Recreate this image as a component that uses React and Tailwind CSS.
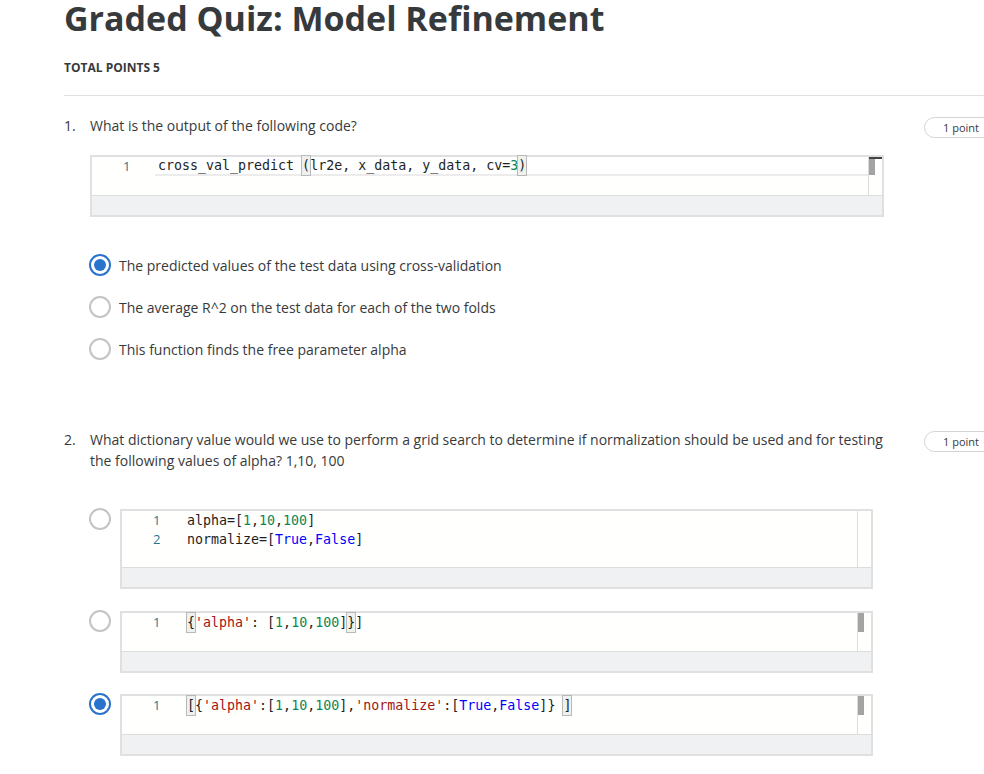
import React from "react";

const mono = "font-['DejaVu_Sans_Mono',monospace] text-[13.3px] text-[#1e1e1e]";

function Num({ children }) {
  return <span className="text-[#098658]">{children}</span>;
}
function Str({ children }) {
  return <span className="text-[#a31515]">{children}</span>;
}
function Kw({ children }) {
  return <span className="text-[#0000ff]">{children}</span>;
}
function Match({ children }) {
  return (
    <span className="outline outline-1 outline-[#b9b9b9] bg-[#eef2ee]">{children}</span>
  );
}

function Radio({ checked }) {
  if (checked) {
    return (
      <div className="w-[22px] h-[22px] shrink-0 rounded-full border-2 border-[#2a73cc] flex items-center justify-center bg-white">
        <div className="w-[12px] h-[12px] rounded-full bg-[#2a73cc]" />
      </div>
    );
  }
  return <div className="w-[22px] h-[22px] shrink-0 rounded-full border-2 border-[#c4c4c4] bg-white" />;
}

function Pill() {
  return (
    <div className="ml-[40px] mt-[2px] h-[21px] w-[76px] shrink-0 rounded-full border border-[#d4d4d4] pl-[18px] text-[11px] leading-[19px] text-[#373a3c]">
      1 point
    </div>
  );
}

function CodeBox({ lines, width, height, gutter, thumb, darkTop, active }) {
  return (
    <div className={`border-2 border-[#e0e0e0] bg-[#fffffe] flex flex-col ${width}`}>
      <div className={`flex ${height}`}>
        <div className="flex-1 flex flex-col">
          {lines.map((line, i) => (
            <div key={i} className="flex h-[19px] items-center">
              <div className={`${gutter} shrink-0 pl-[31px] text-[13px] font-['Open_Sans',sans-serif] text-[#237893]`}>
                {i + 1}
              </div>
              <div
                className={`flex-1 h-[19px] flex items-center pl-[3px] whitespace-pre ${mono} ${
                  active ? "bg-white border-b-2 border-[#ececec]" : ""
                }`}
              >
                {line}
              </div>
            </div>
          ))}
        </div>
        <div className="w-[14px] shrink-0 border-l border-[#dddddd] flex flex-col">
          {darkTop && <div className="h-[2px] w-[13px] bg-[#444444]" />}
          {thumb && <div className={`w-[6px] bg-[#a3a3a3] ${darkTop ? "h-[16px]" : "h-[19px]"}`} />}
        </div>
      </div>
      <div className="h-[20px] border-t border-[#dddddd] bg-[#f0f1f3]" />
    </div>
  );
}

function TextOption({ checked, children }) {
  return (
    <div className="flex h-[42px] items-center gap-[8px] ml-[-1px]">
      <Radio checked={checked} />
      <span className="text-[14px] text-[#373a3c]">{children}</span>
    </div>
  );
}

function CodeOption({ checked, children, mt }) {
  return (
    <div className={`flex items-start ml-[-1px] ${mt}`}>
      <div className="mt-[-1px]">
        <Radio checked={checked} />
      </div>
      <div className="ml-[9px]">{children}</div>
    </div>
  );
}

export default function App() {
  return (
    <div className="w-[984px] h-[774px] overflow-hidden bg-white pl-[64px] font-['Open_Sans',sans-serif] text-[#373a3c]">
      <h1 className="text-[34px] leading-[36px] font-bold text-[#373a3c] whitespace-nowrap">
        Graded Quiz: Model Refinement
      </h1>
      <div className="mt-[24px] text-[12px] leading-[16px] font-bold uppercase">Total Points 5</div>
      <div className="mt-[19px] h-px bg-[#e0e0e0]" />

      {/* question 1 */}
      <div className="mt-[19px] flex items-start">
        <div className="w-[26px] shrink-0 text-[14px] leading-[21px]">1.</div>
        <div className="w-[794px] shrink-0">
          <div className="text-[14px] leading-[21px]">What is the output of the following code?</div>
          <div className="mt-[19px]">
            <CodeBox
              width="w-[794px]"
              height="h-[38px]"
              gutter="w-[63px]"
              thumb
              darkTop
              active
              lines={[
                <>
                  cross_val_predict <Match>(</Match>lr2e, x_data, y_data, cv=<Num>3</Num>
                  <Match>)</Match>
                </>,
              ]}
            />
          </div>
          <div className="mt-[27px] flex flex-col">
            <TextOption checked>The predicted values of the test data using cross-validation</TextOption>
            <TextOption>The average R^2 on the test data for each of the two folds</TextOption>
            <TextOption>This function finds the free parameter alpha</TextOption>
          </div>
        </div>
        <Pill />
      </div>

      {/* question 2 */}
      <div className="mt-[59px] flex items-start">
        <div className="w-[26px] shrink-0 text-[14px] leading-[21px]">2.</div>
        <div className="w-[794px] shrink-0">
          <div className="text-[14px] leading-[21px] whitespace-nowrap">
            What dictionary value would we use to perform a grid search to determine if normalization should be used and for testing
            <br />
            the following values of alpha? 1,10, 100
          </div>
          <CodeOption mt="mt-[38px]">
            <CodeBox
              width="w-[753px]"
              height="h-[56px]"
              gutter="w-[62px]"
              lines={[
                <>
                  alpha=[<Num>1</Num>,<Num>10</Num>,<Num>100</Num>]
                </>,
                <>
                  normalize=[<Kw>True</Kw>,<Kw>False</Kw>]
                </>,
              ]}
            />
          </CodeOption>
          <CodeOption mt="mt-[22px]">
            <CodeBox
              width="w-[753px]"
              height="h-[38px]"
              gutter="w-[62px]"
              thumb
              lines={[
                <>
                  <Match>{"{"}</Match>
                  <Str>'alpha'</Str>: [<Num>1</Num>,<Num>10</Num>,<Num>100</Num>]<Match>{"}"}</Match>]
                </>,
              ]}
            />
          </CodeOption>
          <CodeOption checked mt="mt-[21px]">
            <CodeBox
              width="w-[753px]"
              height="h-[38px]"
              gutter="w-[62px]"
              thumb
              lines={[
                <>
                  <Match>[</Match>
                  {"{"}
                  <Str>'alpha'</Str>:[<Num>1</Num>,<Num>10</Num>,<Num>100</Num>],<Str>'normalize'</Str>:[
                  <Kw>True</Kw>,<Kw>False</Kw>]{"}"} <Match>]</Match>
                </>,
              ]}
            />
          </CodeOption>
        </div>
        <Pill />
      </div>
    </div>
  );
}
